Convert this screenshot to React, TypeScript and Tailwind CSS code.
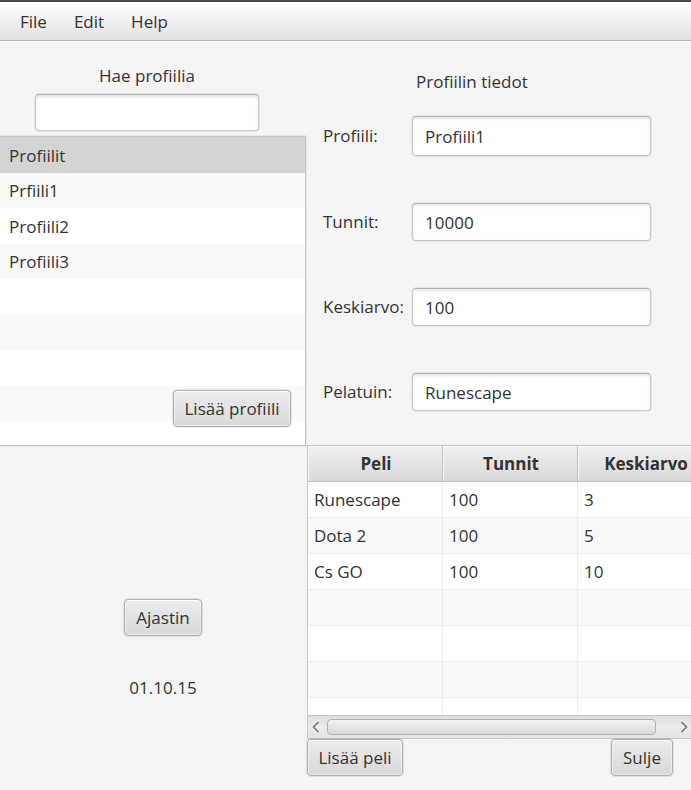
import React, { useState } from "react";

const menus = ["File", "Edit", "Help"];

const profiles = ["Profiilit", "Prfiili1", "Profiili2", "Profiili3", "", "", "", "", ""];

const fields = [
  { id: "profiili", label: "Profiili:", value: "Profiili1" },
  { id: "tunnit", label: "Tunnit:", value: "10000" },
  { id: "keskiarvo", label: "Keskiarvo:", value: "100" },
  { id: "pelatuin", label: "Pelatuin:", value: "Runescape" },
];

const columns = ["Peli", "Tunnit", "Keskiarvo"];

const games = [
  ["Runescape", "100", "3"],
  ["Dota 2", "100", "5"],
  ["Cs GO", "100", "10"],
  ["", "", ""],
  ["", "", ""],
  ["", "", ""],
  ["", "", ""],
];

const inputStyle =
  "rounded-[4px] border border-[#c8c8c8] border-t-[#b5b5b5] bg-white px-3 shadow-[inset_0_2px_3px_rgba(0,0,0,0.1),0_0_0_1px_rgba(0,0,0,0.06)] outline-none focus:border-[#039ed3]";

function Button({ children, width }: { children: React.ReactNode; width: string }) {
  return (
    <button
      type="button"
      className={`h-[37px] rounded-[4px] border border-[#b0b0b0] bg-linear-to-b from-[#ececec] to-[#d9d9d9] text-center whitespace-nowrap shadow-[inset_0_0_0_1px_rgba(255,255,255,0.4),inset_0_1px_0_#fafafa,0_0_0_1px_rgba(0,0,0,0.08)] active:to-[#c8c8c8] ${width}`}
    >
      {children}
    </button>
  );
}

function ProfileList() {
  const [selected, setSelected] = useState(0);
  return (
    <div className="relative h-[310px] border-t border-r border-b border-[#c4c4c4] bg-white shadow-[0_0_0_1px_rgba(0,0,0,0.05)]">
      <ul className="h-full overflow-hidden">
        {profiles.map((name, i) => (
          <li
            key={i}
            onClick={() => name && setSelected(i)}
            className={`flex items-center px-[9px] pt-px odd:h-[36px] even:h-[35px] ${
              i === selected ? "bg-[#d3d3d3]" : "bg-white even:bg-[#f9f9f9]"
            }`}
          >
            {name}
          </li>
        ))}
      </ul>
      <div className="absolute right-[14px] bottom-[18px]">
        <Button width="w-[118px]">Lisää profiili</Button>
      </div>
    </div>
  );
}

function ScrollBar() {
  return (
    <div className="flex h-6 items-center gap-[7px] border-t border-b border-[#c8c8c8] bg-linear-to-b from-[#dedede] via-[#ececec] to-[#e4e4e4] pr-[3px] pl-1">
      <button type="button" aria-label="Vieritä vasemmalle" className="w-2 shrink-0">
        <svg viewBox="0 0 8 12" className="h-3 w-2 fill-none stroke-[#777777]" strokeWidth="1.6">
          <path d="M6.5 1 L1.5 6 L6.5 11" />
        </svg>
      </button>
      <div className="flex-1">
        <div className="h-4 w-[95%] rounded-[4px] border border-[#b0b0b0] bg-linear-to-b from-[#f2f2f2] to-[#dadada]" />
      </div>
      <button type="button" aria-label="Vieritä oikealle" className="w-2 shrink-0">
        <svg viewBox="0 0 8 12" className="h-3 w-2 fill-none stroke-[#777777]" strokeWidth="1.6">
          <path d="M1.5 1 L6.5 6 L1.5 11" />
        </svg>
      </button>
    </div>
  );
}

function GameTable() {
  return (
    <div className="border-t border-l border-[#c4c4c4] bg-white">
      <div className="h-[269px] overflow-hidden">
        <table className="w-[405px] table-fixed border-separate border-spacing-0">
          <thead>
            <tr>
              {columns.map((name) => (
                <th
                  key={name}
                  className="h-[36px] border-r border-b border-[#c0c0c0] bg-linear-to-b from-[#f0f0f0] to-[#d9d9d9] p-0 pt-px pl-0.5 text-center font-bold shadow-[inset_1px_1px_0_rgba(255,255,255,0.7)]"
                >
                  {name}
                </th>
              ))}
            </tr>
          </thead>
          <tbody>
            {games.map((row, i) => (
              <tr key={i} className="bg-white even:bg-[#f9f9f9]">
                {row.map((cell, j) => (
                  <td key={j} className="h-[36px] border-r border-b border-[#ededed] px-[6px] py-0">
                    {cell}
                  </td>
                ))}
              </tr>
            ))}
          </tbody>
        </table>
      </div>
      <ScrollBar />
    </div>
  );
}

export default function App() {
  return (
    <div className="flex min-h-screen flex-col overflow-hidden bg-[#f4f4f4] font-['Open_Sans','Noto_Sans',sans-serif] text-[17px] leading-6 text-[#333333]">
      <nav className="flex h-[41px] gap-[27px] border-t-2 border-b border-t-[#4b4747] border-b-[#b4b4b4] bg-linear-to-b from-[#fdfdfd] to-[#e2e2e2] px-5 pt-0.5">
        {menus.map((name) => (
          <button key={name} type="button">
            {name}
          </button>
        ))}
      </nav>

      <main className="grid flex-1 grid-cols-[306px_minmax(0,1fr)]">
        <div className="flex flex-col">
          <section className="flex flex-col">
            <div className="flex flex-col items-center gap-[6px] pt-[23px] pr-3 pb-[5px]">
              <label htmlFor="haku">Hae profiilia</label>
              <input id="haku" type="text" className={`h-[37px] w-[224px] ${inputStyle}`} />
            </div>
            <ProfileList />
          </section>

          <section className="flex flex-col items-center gap-10 pt-[153px] pl-5">
            <Button width="w-[78px]">Ajastin</Button>
            <time>01.10.15</time>
          </section>
        </div>

        <div className="flex flex-col">
          <section className="h-[404px] pt-[29px] pl-[17px]">
            <h2 className="pl-[93px]">Profiilin tiedot</h2>
            <form className="flex flex-col gap-[47px] pt-[22px]">
              {fields.map((field) => (
                <div key={field.id} className="flex h-[38px] items-center first:h-10">
                  <label htmlFor={field.id} className="w-[89px] shrink-0 whitespace-nowrap">
                    {field.label}
                  </label>
                  <input
                    id={field.id}
                    type="text"
                    defaultValue={field.value}
                    className={`h-full w-[239px] ${inputStyle}`}
                  />
                </div>
              ))}
            </form>
          </section>

          <section className="pl-px">
            <GameTable />
            <div className="flex justify-between pr-[18px]">
              <Button width="w-[96px]">Lisää peli</Button>
              <Button width="w-[62px]">Sulje</Button>
            </div>
          </section>
        </div>
      </main>
    </div>
  );
}
